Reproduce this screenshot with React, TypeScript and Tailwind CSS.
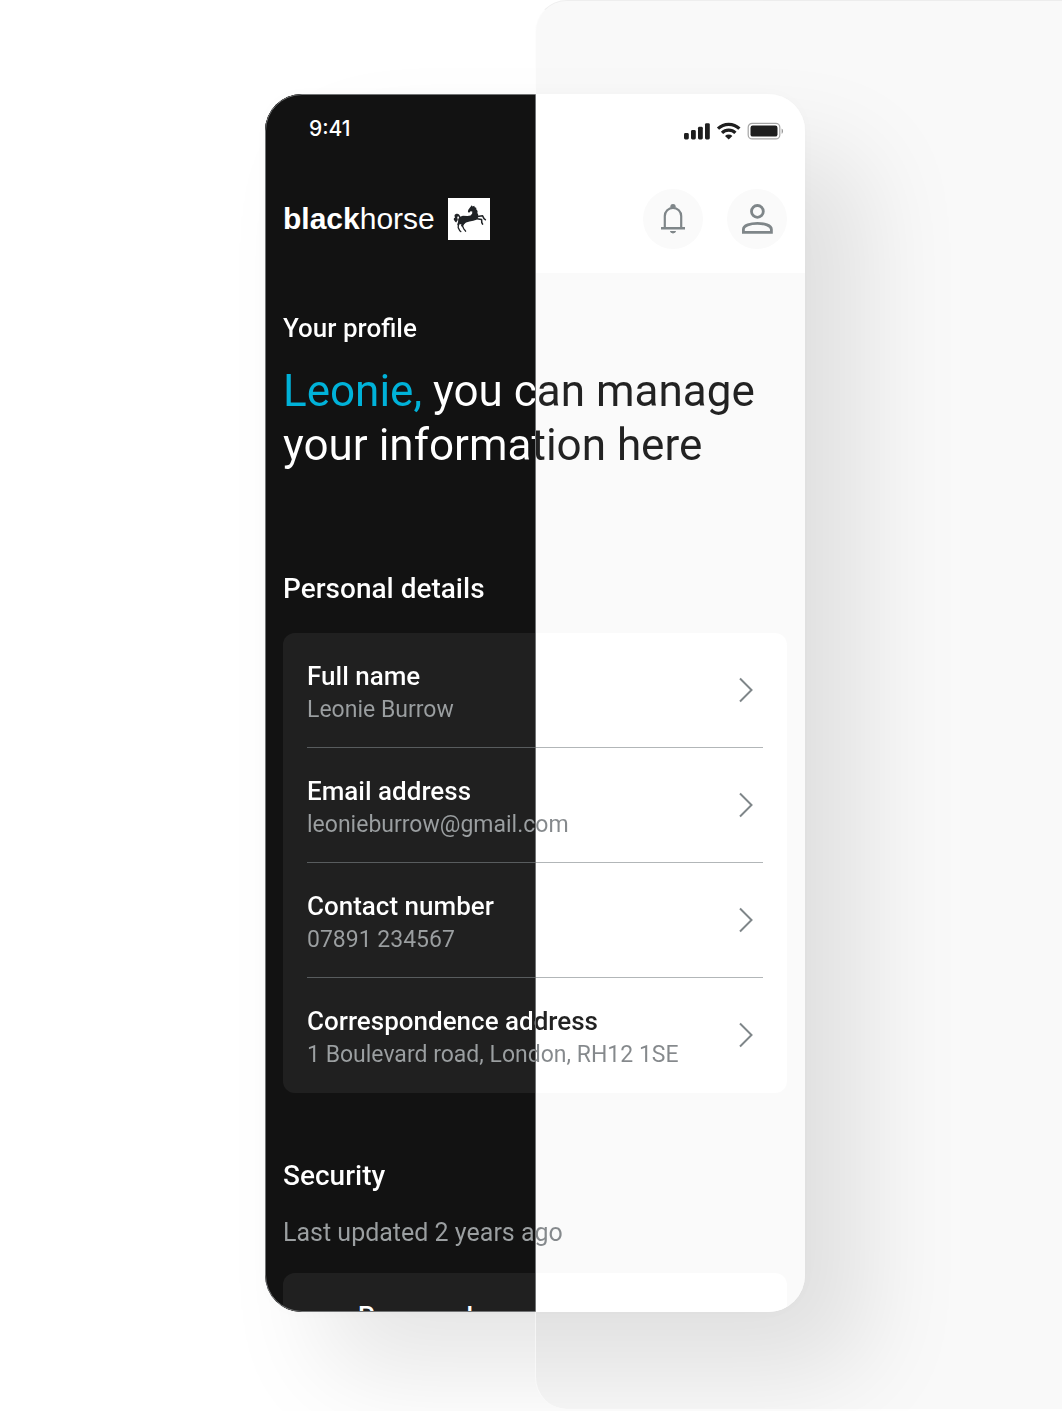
type Detail = {
  label: string;
  value: string;
};

const details: Detail[] = [
  { label: "Full name", value: "Leonie Burrow" },
  { label: "Email address", value: "leonieburrow@gmail.com" },
  { label: "Contact number", value: "07891 234567" },
  { label: "Correspondence address", value: "1 Boulevard road, London, RH12 1SE" },
];

// text is painted by a hard-stop gradient, so it flips colour where the theme flips
const inkText =
  "bg-[linear-gradient(to_right,#ffffff_50%,#222222_50%)] bg-clip-text text-transparent";
const mutedText =
  "bg-[linear-gradient(to_right,#9b9fa1_50%,#85898c_50%)] bg-clip-text text-transparent";
// same as inkText, with cyan under the name
const greetingText =
  "bg-[linear-gradient(to_right,#00b2d9_144px,#ffffff_144px,#ffffff_50%,#222222_50%)] bg-clip-text text-transparent";
const cardSurface = "bg-[linear-gradient(to_right,#202020_50%,#ffffff_50%)]";

export default function App() {
  return (
    <main className="relative min-h-screen overflow-hidden bg-white pt-[94px] pb-[98px] pl-2 font-[Roboto,sans-serif]">
      <div className="pointer-events-none absolute top-0 right-0 bottom-[2px] left-[calc(50%+4px)] z-10 rounded-l-[32px] border-t border-l border-t-black/5 border-l-white/60 bg-black/[0.024]" />
      <div className="mx-auto w-full max-w-[540px] rounded-[37px] shadow-[60px_60px_100px_rgba(0,0,0,0.1),0_0_14px_rgba(0,0,0,0.02)]">
        <div className="relative z-20 overflow-hidden rounded-[37px] bg-[linear-gradient(to_right,#121212_50%,#fafafa_50%)]">
          <Header />
          <Profile />
          <div className="pointer-events-none absolute inset-y-0 left-0 w-[calc(50%+1px)] rounded-l-[37px] border border-[#727475]" />
        </div>
      </div>
    </main>
  );
}

function Header() {
  return (
    <header className="bg-[linear-gradient(to_right,#121212_50%,#ffffff_50%)] pb-6">
      <div className="flex h-[70px] items-center justify-between pr-[21px] pl-11">
        <span className="font-[Inter,sans-serif] text-[21px] font-medium text-white">9:41</span>
        <StatusIcons />
      </div>
      <div className="mt-[25px] flex items-center justify-between px-[18px]">
        <a href="#home" className="flex items-center gap-[13px] text-white">
          <span className="font-['Liberation_Sans',sans-serif] text-3xl">
            <b>black</b>horse
          </span>
          <HorseMark />
        </a>
        <div className="flex gap-6">
          <button
            type="button"
            aria-label="Notifications"
            className="flex size-[60px] items-center justify-center rounded-full bg-[#fafafa] text-[#7f8689]"
          >
            <BellIcon />
          </button>
          <button
            type="button"
            aria-label="Account"
            className="flex size-[60px] items-center justify-center rounded-full bg-[#fafafa] text-[#7f8689]"
          >
            <PersonIcon />
          </button>
        </div>
      </div>
    </header>
  );
}

function Profile() {
  return (
    <div className="px-[18px] pt-[39px]">
      <p className={`text-[26px] leading-8 font-medium ${inkText}`}>Your profile</p>
      <h1 className="mt-5 text-[44px] leading-[54px]">
        <span className={`block ${greetingText}`}>Leonie, you can manage</span>
        <span className={`block ${inkText}`}>your information here</span>
      </h1>

      <h2 className={`mt-[99px] text-[28px] leading-9 font-medium ${inkText}`}>Personal details</h2>
      <ul className={`mt-[26px] rounded-xl px-6 pb-px ${cardSurface}`}>
        {details.map((detail) => (
          <li
            key={detail.label}
            className="border-b border-[#7f8689]/60 last:border-b-0"
          >
            <DetailRow detail={detail} />
          </li>
        ))}
      </ul>

      <h2 className={`mt-[65px] text-[28px] leading-9 font-medium ${inkText}`}>Security</h2>
      <p className={`mt-[23px] text-[25px] leading-8 ${mutedText}`}>
        Last updated 2 years ago
      </p>
      <div className={`mt-6 h-[39px] overflow-hidden rounded-t-xl pt-[27px] pl-[75px] ${cardSurface}`}>
        <p className="text-[26px] leading-[33px] font-medium text-white">Password</p>
      </div>
    </div>
  );
}

function DetailRow({ detail }: { detail: Detail }) {
  return (
    <button type="button" className="grid w-full items-center pt-[27px] pb-[21px] text-left">
      <span className="col-start-1 row-start-1 flex flex-col">
        <span className={`text-[26px] leading-[33px] font-medium ${inkText}`}>{detail.label}</span>
        <span className={`text-[23px] leading-[33px] ${mutedText}`}>{detail.value}</span>
      </span>
      <svg
        className="col-start-1 row-start-1 mr-[10px] mb-[6px] justify-self-end"
        width="15"
        height="26"
        viewBox="0 0 15 26"
        fill="none"
        stroke="#7f8689"
        strokeWidth="2"
      >
        <path d="M2 1.5 13.5 13 2 24.5" />
      </svg>
    </button>
  );
}

function StatusIcons() {
  return (
    <svg className="mt-1" width="100" height="18" viewBox="0 0 100 18" fill="#1f1f1f">
      <rect x="0" y="11" width="4.8" height="6.5" rx="1.4" />
      <rect x="7" y="8" width="4.8" height="9.5" rx="1.4" />
      <rect x="14" y="4.8" width="4.8" height="12.7" rx="1.4" />
      <rect x="21" y="1.2" width="4.8" height="16.3" rx="1.4" />
      <g fill="none" stroke="#1f1f1f" strokeWidth="3.2">
        <path d="M34 6.6a15.4 15.4 0 0 1 21.4 0" />
        <path d="M38 10.8a9.6 9.6 0 0 1 13.4 0" />
      </g>
      <path d="M44.7 17.6 41 13.9a5.4 5.4 0 0 1 7.4 0z" />
      <rect x="64.2" y="1.3" width="31.6" height="15.6" rx="4" fill="none" stroke="#1f1f1f" strokeOpacity=".4" strokeWidth="1.2" />
      <rect x="66.5" y="3.6" width="27" height="11" rx="2.2" />
      <path d="M97.6 6.4c1.9.8 1.9 4.6 0 5.4z" fillOpacity=".45" />
    </svg>
  );
}

function BellIcon() {
  return (
    <svg width="26" height="32" viewBox="0 0 26 32" fill="none" stroke="currentColor" strokeWidth="2.2">
      <path d="M4.8 25.2V13a8.2 8.2 0 0 1 16.4 0v12.2" />
      <path d="M1 25.2h24" strokeWidth="2.4" />
      <path d="M10.2 4.4a2.8 3.4 0 0 1 5.6 0z" fill="currentColor" stroke="none" />
      <path d="M9.8 28h6.4a3.3 3.3 0 0 1-6.4 0z" fill="currentColor" stroke="none" />
    </svg>
  );
}

function PersonIcon() {
  return (
    <svg width="32" height="32" viewBox="0 0 32 32" fill="none" stroke="currentColor" strokeWidth="2.8">
      <circle cx="16.4" cy="8.4" r="5.9" />
      <path d="M2.4 29.4v-3c0-4 7-6 14-6s14 2 14 6v3z" />
    </svg>
  );
}

function HorseMark() {
  return (
    <svg width="42" height="42" viewBox="0 0 42 42">
      <path fill="#fff" d="M0 0h42v42H0z" />
      <g fill="#202326">
        <path d="m23.8 7.2.8 1.2 1.6-.6.6 1.4 1.4.6.2 1.8 1.2 1.4-.2 2 .9 2-.2 2.4-1.6 2.4-3.2 1-3.8.8-3.4 1-2.6 1.8-2.6.2-2.4-1.8-.4-3.4 1.2-2.4 3.6-1.2 4.6.3 3-.7 1.6-1.6.2-2.4-1.8-.1-1.4 1.4-1.2-.7.3-1.9 1.4-2z" />
        <path d="M12.4 19.6c-.3-3-2.4-4.6-4.6-3.6-2 1-1.2 2.6-.7 3.4-1.4.6-1.8 1.8-.9 2.8.8.9.8 1.6 2 2.4.2-1.4 2-1.8 1.5-3.6-.4-1.2-.7-1.8 0-2.6.8-.5 1.2.4 1.4 1.4z" />
      </g>
      <g fill="none" stroke="#202326" strokeLinejoin="round" strokeLinecap="round">
        <path strokeWidth="2.2" d="m11.4 23.4-1 3M15.6 25l-1.4 2.6" />
        <path strokeWidth="1.3" d="m10.4 26.4-.2 3.2 1.6 3.2 1 .8M14.2 27.4l1.6 3.4 1.8 2.4" />
        <path strokeWidth="1.5" d="m29.4 18.6 5.2-.8 1.4 2.8 1.4 1.2M29 20.8l4.6.8.2 3 .8 1.6" />
      </g>
    </svg>
  );
}
